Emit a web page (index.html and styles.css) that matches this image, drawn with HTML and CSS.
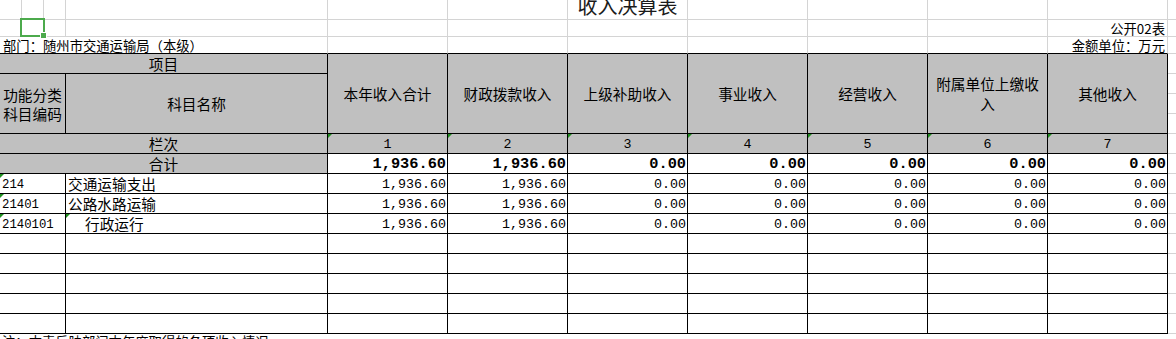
FILE: index.html
```html
<!DOCTYPE html>
<html lang="zh-CN">
<head>
<meta charset="utf-8">
<title>收入决算表</title>
<link rel="stylesheet" href="styles.css">
</head>
<body>
<div class="sheet">
  <!-- row 1 -->
  <div class="c"></div><div class="c"></div><div class="c"></div><div class="c"></div>
  <div class="c"></div><div class="c"></div>
  <div class="c title"><span>收入决算表</span></div>
  <div class="c"></div><div class="c"></div><div class="c"></div><div class="c"></div>
  <div class="c edge"></div>

  <!-- row 2 -->
  <div class="c"></div>
  <div class="c selected"><span class="sel-box"></span><span class="sel-handle"></span></div>
  <div class="c"></div><div class="c"></div>
  <div class="c"></div><div class="c"></div><div class="c"></div><div class="c"></div><div class="c"></div><div class="c"></div>
  <div class="c label right">公开02表</div>
  <div class="c edge"></div>

  <!-- row 3 -->
  <div class="c sp4 base label">部门：随州市交通运输局（本级）</div>
  <div class="c base"></div><div class="c base"></div><div class="c base"></div><div class="c base"></div><div class="c base"></div><div class="c base"></div>
  <div class="c base label right">金额单位：万元</div>
  <div class="c edge"></div>

  <!-- row 4 -->
  <div class="c t hd sp4 center">项目</div>
  <div class="c t hd rs4 center wrap">本年收入合计</div>
  <div class="c t hd rs4 center wrap">财政拨款收入</div>
  <div class="c t hd rs4 center wrap">上级补助收入</div>
  <div class="c t hd rs4 center wrap">事业收入</div>
  <div class="c t hd rs4 center wrap">经营收入</div>
  <div class="c t hd rs4 center wrap">附属单位上缴收入</div>
  <div class="c t hd rs4 center wrap">其他收入</div>
  <div class="c edge"></div>

  <!-- rows 5-7 -->
  <div class="c t hd sp3 rs3 center wrap tight">功能分类<br>科目编码</div>
  <div class="c t hd rs3 center">科目名称</div>
  <div class="c edge"></div>
  <div class="c edge"></div>
  <div class="c edge"></div>

  <!-- row 8 -->
  <div class="c t hd sp4 center">栏次</div>
  <div class="c t hd center mono tri">1</div>
  <div class="c t hd center mono tri">2</div>
  <div class="c t hd center mono tri">3</div>
  <div class="c t hd center mono tri">4</div>
  <div class="c t hd center mono tri">5</div>
  <div class="c t hd center mono tri">6</div>
  <div class="c t hd center mono tri">7</div>
  <div class="c edge"></div>

  <!-- row 9 -->
  <div class="c t hd sp4 center">合计</div>
  <div class="c t num bold">1,936.60</div>
  <div class="c t num bold">1,936.60</div>
  <div class="c t num bold">0.00</div>
  <div class="c t num bold">0.00</div>
  <div class="c t num bold">0.00</div>
  <div class="c t num bold">0.00</div>
  <div class="c t num bold">0.00</div>
  <div class="c edge"></div>

  <!-- row 10 -->
  <div class="c t sp3 code tri">214</div>
  <div class="c t name">交通运输支出</div>
  <div class="c t num">1,936.60</div>
  <div class="c t num">1,936.60</div>
  <div class="c t num">0.00</div>
  <div class="c t num">0.00</div>
  <div class="c t num">0.00</div>
  <div class="c t num">0.00</div>
  <div class="c t num">0.00</div>
  <div class="c edge"></div>

  <!-- row 11 -->
  <div class="c t sp3 code tri">21401</div>
  <div class="c t name">公路水路运输</div>
  <div class="c t num">1,936.60</div>
  <div class="c t num">1,936.60</div>
  <div class="c t num">0.00</div>
  <div class="c t num">0.00</div>
  <div class="c t num">0.00</div>
  <div class="c t num">0.00</div>
  <div class="c t num">0.00</div>
  <div class="c edge"></div>

  <!-- row 12 -->
  <div class="c t sp3 code tri">2140101</div>
  <div class="c t name indent tri">行政运行</div>
  <div class="c t num">1,936.60</div>
  <div class="c t num">1,936.60</div>
  <div class="c t num">0.00</div>
  <div class="c t num">0.00</div>
  <div class="c t num">0.00</div>
  <div class="c t num">0.00</div>
  <div class="c t num">0.00</div>
  <div class="c edge"></div>

  <!-- rows 13-17 (empty) -->
  <div class="c t sp3"></div><div class="c t"></div>
  <div class="c t"></div><div class="c t"></div><div class="c t"></div><div class="c t"></div><div class="c t"></div><div class="c t"></div><div class="c t"></div>
  <div class="c edge"></div>

  <div class="c t sp3"></div><div class="c t"></div>
  <div class="c t"></div><div class="c t"></div><div class="c t"></div><div class="c t"></div><div class="c t"></div><div class="c t"></div><div class="c t"></div>
  <div class="c edge"></div>

  <div class="c t sp3"></div><div class="c t"></div>
  <div class="c t"></div><div class="c t"></div><div class="c t"></div><div class="c t"></div><div class="c t"></div><div class="c t"></div><div class="c t"></div>
  <div class="c edge"></div>

  <div class="c t sp3"></div><div class="c t"></div>
  <div class="c t"></div><div class="c t"></div><div class="c t"></div><div class="c t"></div><div class="c t"></div><div class="c t"></div><div class="c t"></div>
  <div class="c edge"></div>

  <div class="c t sp3"></div><div class="c t"></div>
  <div class="c t"></div><div class="c t"></div><div class="c t"></div><div class="c t"></div><div class="c t"></div><div class="c t"></div><div class="c t"></div>
  <div class="c edge"></div>

  <!-- row 18: note -->
  <div class="note">注：本表反映部门本年度取得的各项收入情况。</div>
</div>
</body>
</html>
```

FILE: styles.css
```css
html, body {
  margin: 0;
  padding: 0;
  background: #ffffff;
}

body {
  width: 1176px;
  height: 339px;
  overflow: hidden;
  font-family: "Noto Sans CJK SC", "Noto Sans", sans-serif;
  color: #000;
}

.sheet {
  display: grid;
  grid-template-columns: 22px 22px 22px 262px repeat(7, 120px) 8px;
  grid-template-rows: 20px 17px 17px repeat(14, 20px) 20px;
}

.c {
  box-sizing: border-box;
  border-right: 1px solid #d4d4d4;
  border-bottom: 1px solid #d4d4d4;
  display: flex;
  align-items: center;
  min-width: 0;
  white-space: nowrap;
  font-size: 14.67px;
  line-height: 19px;
}

.edge {
  border-right: none;
}

/* table cells */
.t {
  border-right-color: #000;
  border-bottom-color: #000;
}

.base {
  border-bottom-color: #000;
}

.hd {
  background: #c0c0c0;
}

.sp3 { grid-column: span 3; }
.sp4 { grid-column: span 4; }
.rs3 { grid-row: span 3; }
.rs4 { grid-row: span 4; }

.center {
  justify-content: center;
  text-align: center;
}

.right {
  justify-content: flex-end;
  text-align: right;
}

.wrap {
  white-space: normal;
  padding: 0 4px;
  line-height: 20px;
}

.tight {
  padding: 0;
  line-height: 19px;
}

.title {
  justify-content: center;
  align-items: flex-start;
  overflow: visible;
}

.title span {
  font-size: 20px;
  line-height: 20px;
  margin-top: -4px;
  color: #1b1b1b;
}

.label {
  font-size: 13.33px;
  line-height: 15px;
  align-items: flex-end;
  padding: 0 2px 0 3px;
}

.mono {
  font-family: "Liberation Mono", "DejaVu Sans Mono", monospace;
  font-size: 13.33px;
  padding-top: 1px;
}

.num {
  font-family: "Liberation Mono", "DejaVu Sans Mono", monospace;
  font-size: 13.33px;
  justify-content: flex-end;
  padding-right: 1px;
  padding-top: 2px;
}

.num.bold {
  font-weight: bold;
  font-size: 15.3px;
  padding-top: 1px;
}

.code {
  font-family: "Liberation Mono", "DejaVu Sans Mono", monospace;
  font-size: 12.3px;
  padding-left: 2px;
  padding-top: 3px;
}

.name {
  padding-left: 2px;
}

.name.indent {
  padding-left: 19px;
}

/* green "number stored as text" triangles */
.tri {
  position: relative;
}

.tri::before {
  content: "";
  position: absolute;
  left: 0;
  top: 0;
  width: 0;
  height: 0;
  border-top: 4px solid #1f8f1f;
  border-right: 4px solid transparent;
}

/* selected cell */
.selected {
  position: relative;
}

.sel-box {
  position: absolute;
  left: -2px;
  top: -2px;
  width: 25px;
  height: 19px;
  box-sizing: border-box;
  border: 2px solid #4caa4c;
}

.sel-handle {
  position: absolute;
  left: 19px;
  top: 13px;
  width: 5px;
  height: 5px;
  background: #4caa4c;
  box-shadow: 0 0 0 1px #ffffff;
}

.note {
  grid-column: 1 / -1;
  font-size: 13.33px;
  line-height: 14px;
  padding-left: 2px;
  margin-top: 1px;
  white-space: nowrap;
}
```
